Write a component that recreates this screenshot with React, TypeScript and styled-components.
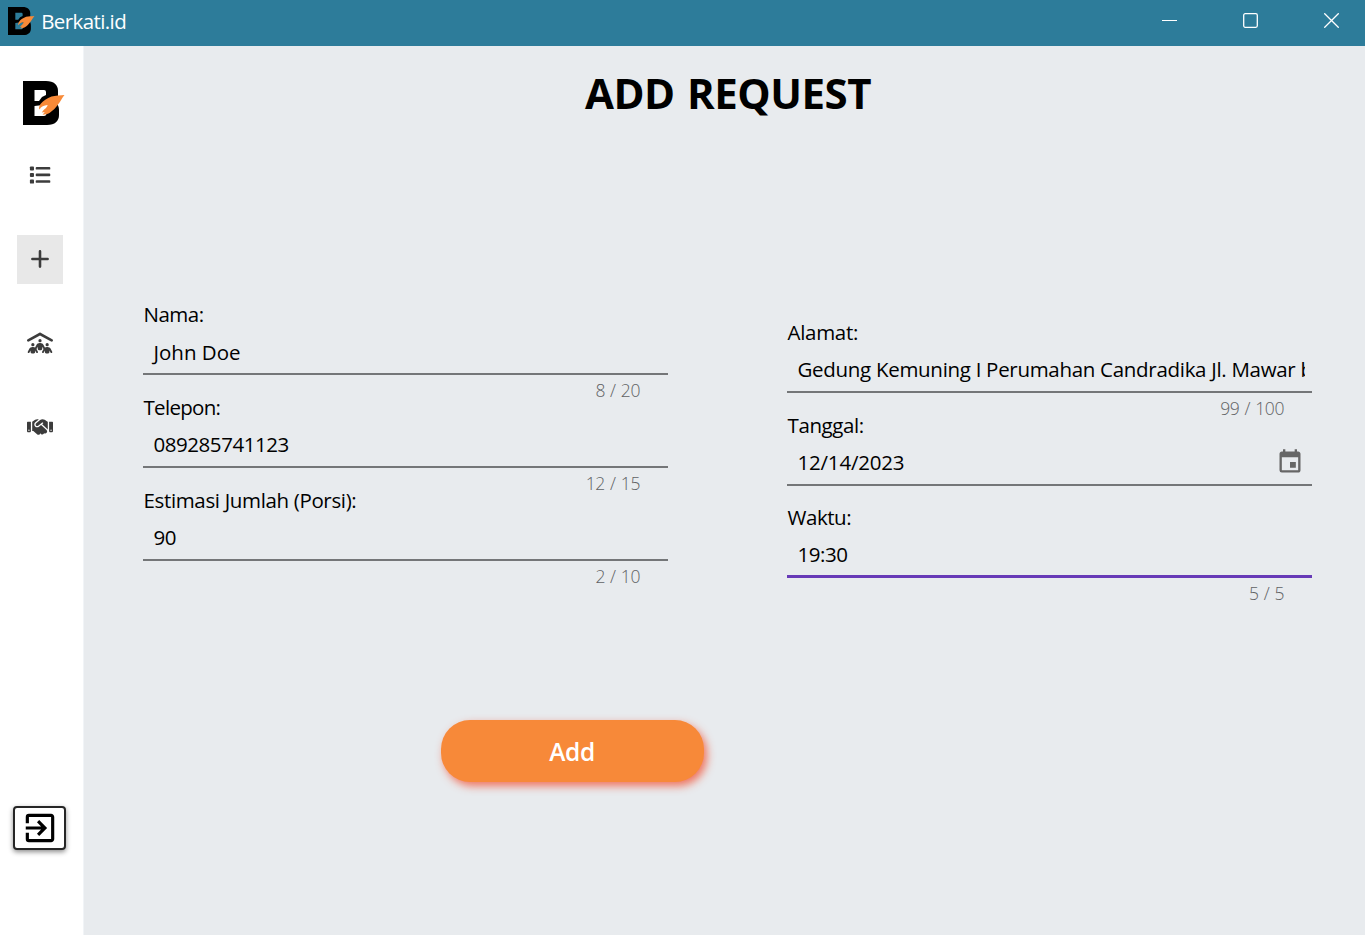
import React from "react";
import styled, { createGlobalStyle } from "styled-components";
import { MdEvent, MdExitToApp } from "react-icons/md";
import { FaHandshake, FaPeopleRoof } from "react-icons/fa6";

const GlobalStyle = createGlobalStyle`
  * { box-sizing: border-box; }
  body {
    margin: 0;
    overflow: hidden;
    font-family: "Open Sans", "Noto Sans", sans-serif;
    color: #000;
  }
`;

const Window = styled.div`
  width: 1365px;
  height: 935px;
  display: flex;
  flex-direction: column;
  background: #e8ebee;
`;

const TitleBar = styled.header`
  flex: 0 0 46px;
  display: flex;
  align-items: center;
  padding: 0 26px 5px 8px;
  background: #2d7c9a;
  color: #fff;
`;

const AppName = styled.span`
  margin-left: 6.5px;
  font-size: 20.5px;
  line-height: 28px;
  letter-spacing: -0.6px;
`;

const WindowControls = styled.div`
  margin-left: auto;
  display: flex;
  gap: 66px;

  svg {
    display: block;
  }
`;

const Body = styled.div`
  flex: 1;
  display: flex;
  min-height: 0;
`;

const Sidebar = styled.nav`
  flex: 0 0 84px;
  display: flex;
  flex-direction: column;
  background: #fff;
  border-right: 1px solid #f1f4f7;
  padding: 35px 0 85px;
`;

const SidebarLogo = styled.div`
  height: 44px;
  margin: 0 0 26px 23px;
`;

const NavList = styled.div`
  display: flex;
  flex-direction: column;
  gap: 35px;
  margin-left: 17px;
`;

const NavButton = styled.button<{ $active?: boolean }>`
  width: 46px;
  height: 49px;
  display: flex;
  align-items: center;
  justify-content: center;
  padding: 0 0 2px;
  border: 0;
  background: ${(p) => (p.$active ? "#e8e8e8" : "transparent")};
  color: #3c3c3c;
`;

const ExitButton = styled.button`
  width: 53px;
  height: 44px;
  margin: auto 0 0 13px;
  display: flex;
  align-items: center;
  justify-content: center;
  padding: 0;
  border: 2px solid #262626;
  border-radius: 4px;
  background: #fff;
  color: #000;
  box-shadow: 0 2px 5px rgba(0, 0, 0, 0.45);

  svg {
    flex: none;
  }
`;

const Main = styled.main`
  flex: 1;
  display: flex;
  flex-direction: column;
  padding: 17px 53px 0 59px;
`;

const Heading = styled.h1`
  margin: 0 0 178px 1px;
  align-self: center;
  height: 60px;
  font-size: 42px;
  line-height: 60px;
  font-weight: 700;
  letter-spacing: -0.5px;
  word-spacing: 2px;
`;

const Form = styled.form`
  display: grid;
  grid-template-columns: 525px 525px;
  column-gap: 119px;
  height: 419px;
  align-items: start;
`;

const Column = styled.div<{ $offset: number }>`
  display: flex;
  flex-direction: column;
  padding-top: ${(p) => p.$offset}px;
`;

const Field = styled.div`
  display: flex;
  flex-direction: column;
  height: 92.67px;
`;

const Label = styled.label<{ $tracking: number }>`
  height: 28px;
  line-height: 27.2px;
  padding-left: 0.5px;
  font-size: 20.5px;
  letter-spacing: ${(p) => p.$tracking}px;
  white-space: nowrap;
`;

const InputLine = styled.div<{ $focused?: boolean }>`
  height: 46px;
  display: flex;
  align-items: center;
  justify-content: space-between;
  padding: 0 7px 0 6.5px;
  border-bottom: ${(p) => (p.$focused ? "3px solid #673ab7" : "2px solid #747678")};

  svg {
    flex: none;
    margin-right: 1px;
  }
`;

const Value = styled.div<{ $tracking: number }>`
  flex: 1;
  overflow: hidden;
  white-space: nowrap;
  padding: 1px 0 0 4px;
  font-size: 20.5px;
  line-height: 30px;
  letter-spacing: ${(p) => p.$tracking}px;
`;

const Counter = styled.div`
  height: 18.67px;
  line-height: 31.4px;
  padding-right: 28px;
  text-align: right;
  font-size: 17.5px;
  font-weight: 350;
  letter-spacing: -0.4px;
  word-spacing: 1px;
  color: #606264;
`;

const AddButton = styled.button`
  width: 263px;
  height: 62px;
  margin: 0 0 0 298px;
  padding: 1px 1px 0 0;
  border: 0;
  border-radius: 29px;
  background: #f78939;
  color: #fff;
  font: 600 24.5px/30px "Open Sans", sans-serif;
  letter-spacing: -0.4px;
  box-shadow: 3px 4px 8px rgba(244, 67, 36, 0.7);
`;

function BrandMark({ height }: { height: number }) {
  return (
    <svg width={(height * 42) / 44} height={height} viewBox="0 0 42 44">
      <path
        fillRule="evenodd"
        fill="#000"
        d="M0 0H23C31 0 35 4 35 10V16C35 18 34 20 32 21C35 23 36 26 36 29V34C36 40 32 44 24 44H0ZM11.500 9V20H16L19 16L23 14V11Q23 9 21 9ZM11.500 25V35H21Q23 35 23.500 33L25.500 24L20 24Z"
      />
      <path
        fill="#f88a38"
        d="M41.500 14C38 14.300 32 14.500 28.500 15.500C24 17 20 20 17.500 23C16 25.500 15.500 27 16.500 28.500C18 25.500 21 24.300 24.500 24C25 26 20.500 28.500 18.800 31.500L21.800 31L19.500 33.800C22 33.300 24.500 33.500 26.500 32C30 29.500 32.500 27 35 23.500C37.500 20.500 39 17 41.500 14Z"
      />
    </svg>
  );
}

function ListIcon() {
  return (
    <svg width="22" height="20" viewBox="0 0 22 20" fill="currentColor">
      {[1.2, 7.8, 14.4].map((y) => (
        <React.Fragment key={y}>
          <rect x="0.900" y={y + 0.2} width="4.100" height="4" rx="0.900" />
          <rect x="6.700" y={y + 0.8} width="14.600" height="2.600" rx="0.900" />
        </React.Fragment>
      ))}
    </svg>
  );
}

function PlusIcon() {
  return (
    <svg width="18" height="18" viewBox="0 0 18 18" stroke="currentColor" strokeWidth="2.600" strokeLinecap="round">
      <path d="M9 1.400V16.600M1.400 9H16.600" />
    </svg>
  );
}

interface FieldData {
  label: string;
  labelTracking: number;
  value: string;
  valueTracking: number;
  counter?: string;
  calendar?: boolean;
  focused?: boolean;
}

const leftFields: FieldData[] = [
  { label: "Nama:", labelTracking: -0.5, value: "John Doe", valueTracking: 0, counter: "8 / 20" },
  { label: "Telepon:", labelTracking: -0.7, value: "089285741123", valueTracking: -0.45, counter: "12 / 15" },
  { label: "Estimasi Jumlah (Porsi):", labelTracking: -0.35, value: "90", valueTracking: -0.45, counter: "2 / 10" },
];

const rightFields: FieldData[] = [
  {
    label: "Alamat:",
    labelTracking: -0.3,
    value: "Gedung Kemuning I Perumahan Candradika Jl. Mawar blok C",
    valueTracking: -0.3,
    counter: "99 / 100",
  },
  { label: "Tanggal:", labelTracking: -0.4, value: "12/14/2023", valueTracking: -0.2, calendar: true },
  { label: "Waktu:", labelTracking: -0.45, value: "19:30", valueTracking: -0.45, counter: "5 / 5", focused: true },
];

function FormField({ data }: { data: FieldData }) {
  return (
    <Field>
      <Label $tracking={data.labelTracking}>{data.label}</Label>
      <InputLine $focused={data.focused}>
        <Value $tracking={data.valueTracking}>{data.value}</Value>
        {data.calendar && <MdEvent size={28} color="#666" />}
      </InputLine>
      {data.counter && <Counter>{data.counter}</Counter>}
    </Field>
  );
}

export default function App() {
  return (
    <Window>
      <GlobalStyle />
      <TitleBar>
        <BrandMark height={28} />
        <AppName>Berkati.id</AppName>
        <WindowControls>
          <svg width="15" height="15" viewBox="0 0 15 15" stroke="#fff" fill="none">
            <path d="M0 7.500H15" />
          </svg>
          <svg width="15" height="15" viewBox="0 0 15 15" stroke="#fff" strokeWidth="1.300" fill="none">
            <rect x="0.700" y="0.700" width="13.600" height="13.600" rx="1.500" />
          </svg>
          <svg width="15" height="15" viewBox="0 0 15 15" stroke="#fff" strokeWidth="1.300" fill="none">
            <path d="M0.300 0.300L14.700 14.700M14.700 0.300L0.300 14.700" />
          </svg>
        </WindowControls>
      </TitleBar>
      <Body>
        <Sidebar>
          <SidebarLogo>
            <BrandMark height={44} />
          </SidebarLogo>
          <NavList>
            <NavButton aria-label="Requests">
              <ListIcon />
            </NavButton>
            <NavButton aria-label="Add request" $active>
              <PlusIcon />
            </NavButton>
            <NavButton aria-label="Community">
              <FaPeopleRoof size={26} />
            </NavButton>
            <NavButton aria-label="Partners">
              <FaHandshake size={26} />
            </NavButton>
          </NavList>
          <ExitButton aria-label="Exit">
            <MdExitToApp size={38} />
          </ExitButton>
        </Sidebar>
        <Main>
          <Heading>ADD REQUEST</Heading>
          <Form>
            <Column $offset={0.2}>
              {leftFields.map((f) => (
                <FormField key={f.label} data={f} />
              ))}
            </Column>
            <Column $offset={17.9}>
              {rightFields.map((f) => (
                <FormField key={f.label} data={f} />
              ))}
            </Column>
          </Form>
          <AddButton type="button">Add</AddButton>
        </Main>
      </Body>
    </Window>
  );
}
